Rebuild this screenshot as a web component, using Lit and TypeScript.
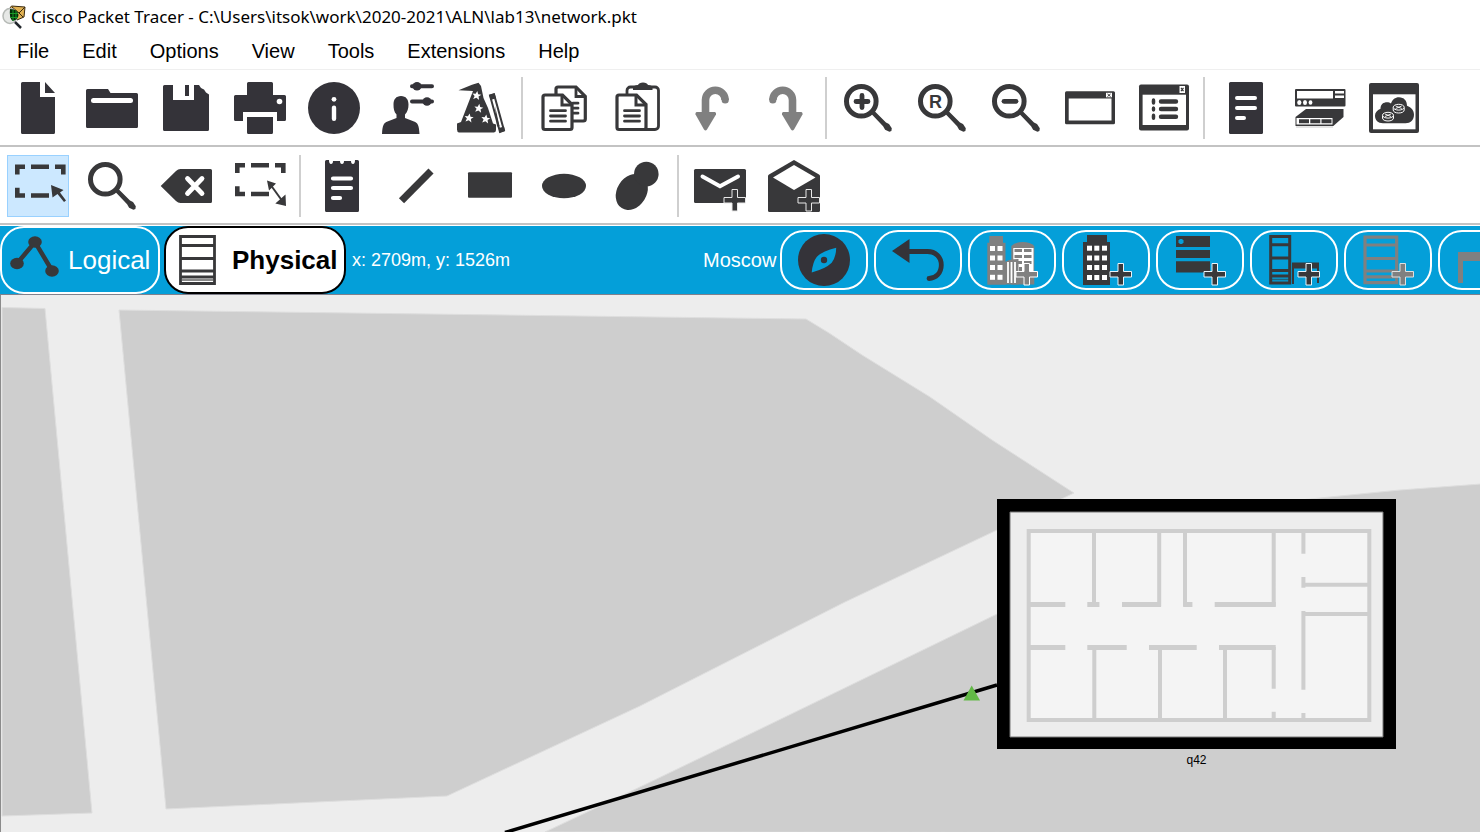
import { LitElement, html, css, svg, nothing } from "lit";
import type { SVGTemplateResult } from "lit";
import { customElement } from "lit/decorators.js";
import { classMap } from "lit/directives/class-map.js";

const INK = "#343339";
const DARK = "#38383a";
const MUTED = "#808080";
const BLUE = "#049fd9";

interface Tool {
  label: string;
  icon: SVGTemplateResult;
  active?: boolean;
}

const plus = (fill: string, edge: string) => svg`
  <path d="M38 29.500h5.500v8h8v5.500h-8v8h-5.500v-8h-8v-5.500h8z"
    fill=${fill} stroke=${edge} stroke-width="1"/>`;

const magnifier = svg`
  <circle cx="19.3" cy="19.300" r="14.800" fill="none" stroke=${DARK} stroke-width="5"/>
  <path d="M28.500 31l3-3 12.500 12.500 3 1.500 2.800 4.300-.4 2.600-2 .8-4.300-2-2-3.500z" fill=${DARK}/>`;

const frontSheet = svg`
  <path d="M7 13h17.500L34 22.500V45.500a2 2 0 0 1-2 2H7a2 2 0 0 1-2-2V15a2 2 0 0 1 2-2z" fill="#fff" stroke=${DARK} stroke-width="3.200"/>
  <path d="M24 13v10h10" fill="none" stroke=${DARK} stroke-width="3"/>
  <path d="M12.500 28.700h15M12.500 34h15M12.500 39.200h15" stroke=${DARK} stroke-width="2.800" stroke-linecap="round"/>`;

const star = (x: number, y: number) => svg`
  <path transform="translate(${x} ${y}) rotate(8)" fill="#fff"
    d="M0-4.500 1.300-1.500 4.500-1.300 2 .8 3 4 0 2.200-3 4-2 .8-4.500-1.300-1.300-1.500z"/>`;

const router = (x: number, y: number) => svg`
  <g transform="translate(${x} ${y})">
    <path d="M-5.500-1v2.500c0 4 11 4 11 0V-1" fill=${DARK} stroke="#fff" stroke-width="1"/>
    <ellipse cx="0" cy="-1.300" rx="5.500" ry="2.900" fill=${DARK} stroke="#fff" stroke-width="1"/>
    <path d="M-3-2.500 3 0M-3 0 3-2.500" stroke="#fff" stroke-width=".9"/>
  </g>`;

const undoHook = svg`
  <path d="M19.500 31V18a9.800 9.800 0 0 1 19.600 0" fill="none" stroke=${MUTED} stroke-width="7.600"/>
  <circle cx="39.200" cy="18" r="3.600" fill=${MUTED}/>
  <path d="M10.500 30h18.500q1.500.5 1 2.500l-9 15q-1.500 2-3 0l-8.500-15q-.5-2 1-2.500z" fill=${MUTED}/>`;

const dashes = (x: number, y: number) => svg`
  <path transform="translate(${x} ${y})" fill="none" stroke=${DARK} stroke-width="4.600"
    d="M2.300 10V2.300H10M16 2.300h18M40 2.300h8.300V10M2.300 23.300V31H10M16 31h18"/>`;

const fileTools: Tool[] = [
  { label: "New", icon: svg`<path fill=${INK} d="M10.500 0H28v15h15v35.500a1.500 1.500 0 0 1-1.500 1.500h-31A1.500 1.500 0 0 1 9 50.500v-49A1.500 1.500 0 0 1 10.500 0zM33 0l10 11H33z"/>` },
  { label: "Open", icon: svg`
      <path fill=${INK} d="M1.500 7H22l2.500 4H50.500a1.500 1.500 0 0 1 1.500 1.500v32a1.500 1.500 0 0 1-1.500 1.500h-49A1.500 1.500 0 0 1 0 44.500v-36A1.500 1.500 0 0 1 1.500 7z"/>
      <rect x="5" y="16" width="42" height="5" rx="2.500" fill="#fff"/>` },
  { label: "Save", icon: svg`
      <path fill=${INK} d="M4.500 3H13v15h21V3h5l2 3 3 1.500 2 3 3 2v35a1.500 1.500 0 0 1-1.500 1.500h-43A1.500 1.500 0 0 1 3 47.500v-43A1.500 1.500 0 0 1 4.500 3z"/>
      <rect x="25" y="3" width="4" height="11" fill=${INK}/>` },
  { label: "Print", icon: svg`
      <path fill=${INK} d="M14.500 0h23A1.500 1.500 0 0 1 39 1.500V13h11.500a1.500 1.500 0 0 1 1.500 1.500v23a1.500 1.500 0 0 1-1.500 1.500H43v-9H9v9H1.500A1.500 1.500 0 0 1 0 37.500v-23A1.500 1.500 0 0 1 1.500 13H13V1.500A1.500 1.500 0 0 1 14.500 0zM13 35h26v15.500a1.500 1.500 0 0 1-1.500 1.500h-23a1.500 1.500 0 0 1-1.500-1.500z"/>
      <circle cx="45.500" cy="19.500" r="2.800" fill="#fff"/>` },
  { label: "Info", icon: svg`
      <circle cx="26" cy="26" r="26" fill=${INK}/>
      <circle cx="26" cy="17.300" r="2.400" fill="#fff"/>
      <rect x="23.800" y="23.500" width="4.400" height="15.500" rx="2.200" fill="#fff"/>` },
  { label: "User profile", icon: svg`
      <path fill=${INK} d="M19 14c5 0 7.500 3.500 7.500 8.500 0 4-1 7.500-3.500 10v3.500l9 3.500c3.500 1.500 5 3 5.500 12.500H0c.5-9.500 2-11 5.500-12.500l9-3.500v-3.500c-2.500-2.500-3-6-3-10 0-5 2.500-8.500 7.500-8.500z"/>
      <path d="M30 4.300h20M30 19.500h20" stroke=${INK} stroke-width="4" stroke-linecap="round"/>
      <ellipse cx="35" cy="4.300" rx="4.500" ry="4.300" fill=${INK}/>
      <ellipse cx="45" cy="19.500" rx="4.500" ry="4.300" fill=${INK}/>` },
  { label: "Wizard", icon: svg`
      <path fill=${DARK} d="M2.500 8.300 16 2.800 22.500.8 25 4l2.500 12L32 26l5 15.500 3 1v5.500q0 2-2 2.500H3q-2-.5-2-3v-6l4-1.500L17 9z"/>
      ${star(20.700, 13.500)}${star(22.700, 26.300)}${star(13, 36)}${star(29.700, 37)}
      <path d="M34 13.500l4-1.300 10 36.300-4 1.500z" fill="#fff" stroke=${DARK} stroke-width="2"/>
      <path d="M33 13l5.500-1.800 1.500 5-5.300 1.800zM39 24l4.500 20-2.500.5zM43 46l5-1.500 1 4.500-5 1.500z" fill=${DARK}/>` },
];

const editTools: Tool[] = [
  { label: "Copy", icon: svg`
      <path d="M20 5h18l9.300 9.500V37a2 2 0 0 1-2 2H20a2 2 0 0 1-2-2V7a2 2 0 0 1 2-2z" fill="#fff" stroke=${DARK} stroke-width="3.200"/>
      <path d="M38 5v9.500h9.300" fill="none" stroke=${DARK} stroke-width="2.800"/>
      <path d="M35 21.200h5M35 26.200h5M35 31.200h5" stroke=${DARK} stroke-width="2.800" stroke-linecap="round"/>
      ${frontSheet}` },
  { label: "Paste", icon: svg`
      <rect x="15" y="5" width="31.500" height="42.500" rx="3.500" fill="#fff" stroke=${DARK} stroke-width="2.800"/>
      <path d="M21 8V5.500q1-2.500 5-2.500 1-2.500 5-2.500t5 2.500q4 0 4.500 2.500V8z" fill=${DARK}/>
      ${frontSheet}` },
  { label: "Undo", icon: undoHook },
  { label: "Redo", icon: svg`<g transform="matrix(-1 0 0 1 52 0)">${undoHook}</g>` },
];

const viewTools: Tool[] = [
  { label: "Zoom in", icon: svg`${magnifier}<path d="M14 19.500h12M20 13.500v12" stroke=${DARK} stroke-width="4.800" stroke-linecap="round"/>` },
  { label: "Zoom reset", icon: svg`${magnifier}<text x="19.500" y="26" class="glyph" text-anchor="middle" fill=${DARK}>R</text>` },
  { label: "Zoom out", icon: svg`${magnifier}<path d="M14 19.300h12" stroke=${DARK} stroke-width="4.800" stroke-linecap="round"/>` },
  { label: "Drawing palette", icon: svg`
      <rect x="1" y="9.300" width="50" height="33" rx="1.500" fill=${DARK}/>
      <rect x="4.700" y="16.500" width="42.800" height="22" fill="#fff"/>
      <rect x="42" y="10.800" width="6" height="4.500" fill="#fff"/>
      <path d="M43.500 12l3 2.500M46.500 12l-3 2.500" stroke=${DARK} stroke-width="1"/>` },
  { label: "Custom devices dialog", icon: svg`
      <rect x="1" y="2.500" width="50" height="46" rx="2" fill=${DARK}/>
      <rect x="4.600" y="12.700" width="43.400" height="30.300" fill="#fff"/>
      <rect x="41.500" y="4" width="5.500" height="7" fill="#fff"/>
      <path d="M43 5.800l2.500 3.400M45.500 5.800l-2.500 3.400" stroke=${DARK} stroke-width="1.200"/>
      <path d="M23 19.500h15M23 27h15M23 34.700h15" stroke=${DARK} stroke-width="4.400" stroke-linecap="round"/>
      <g fill=${DARK}><ellipse cx="15.500" cy="19.500" rx="1.800" ry="3.200"/><ellipse cx="15.500" cy="27" rx="1.800" ry="2.800"/><ellipse cx="15.500" cy="34.700" rx="1.800" ry="3.200"/></g>` },
];

const deviceTools: Tool[] = [
  { label: "Activity description", icon: svg`
      <rect x="9" y="0" width="34" height="52" rx="1.500" fill=${INK}/>
      <path d="M17 16h18M17 26h18M17 36h7" stroke="#fff" stroke-width="4" stroke-linecap="round"/>` },
  { label: "Devices", icon: svg`
      <rect x="1" y="7" width="50.500" height="17.500" rx="1" fill=${DARK}/>
      <path d="M3 9h36v7.500H3zM41 9h9v2.500h-9zM41 13.500h9v2.500h-9z" fill="#fff"/>
      <g fill="#fff"><ellipse cx="5.300" cy="20.500" rx="2.100" ry="2.500"/><ellipse cx="11" cy="20.500" rx="2" ry="2.500"/><ellipse cx="16.500" cy="20.500" rx="1.900" ry="2.300"/></g>
      <path d="M1.500 35 12 27H49.500v8L39.300 44H1.500z" fill=${DARK}/>
      <path d="M2.500 36h36v6.500h-36z" fill="#fff"/>
      <path d="M5 37.300h10v4H5zM16.300 37.300h10v4h-10zM27.500 37.300h10v4h-10z" fill=${DARK}/>
      <path d="M2 45h37" stroke="#ddd" stroke-width="1.500"/>` },
  { label: "Cloud", icon: svg`
      <rect x="1" y="1" width="50" height="50" rx="2" fill=${DARK}/>
      <rect x="5" y="12.300" width="42.500" height="35" fill="#fff"/>
      <path d="M15 41.300c-5 0-8-3-8-7.500 0-3 2-5.500 5.500-7 0-4.500 3-6.500 6.500-6.500 1.500 0 3 .3 4 1.200 1.500-4 4-6.200 8-6.200 5 0 8 3.500 8 8.500 4.500 1.500 7 5 7 9 0 5-3.500 8.500-8.500 8.500z" fill=${DARK}/>
      ${router(30.700, 26.500)}${router(20, 34.500)}` },
];

const selectTools: Tool[] = [
  { label: "Select", active: true, icon: svg`${dashes(3, 4.500)}<path d="M39 25l12.500 5-3.500 2.500 6 8-2 1.500-6.500-8-5 3.600z" fill=${DARK}/>` },
  { label: "Inspect", icon: magnifier },
  { label: "Delete", icon: svg`
      <path d="M.7 26 16 11q2-2 4.500-2H50.500a1.500 1.500 0 0 1 1.500 1.500v31a1.500 1.500 0 0 1-1.500 1.500h-30q-2.500 0-4.500-2z" fill=${DARK}/>
      <path d="M27.500 18.500l14.500 15M42 18.500l-14.500 15" stroke="#fff" stroke-width="4.800" stroke-linecap="round"/>` },
  { label: "Resize shape", icon: svg`${dashes(1, 3)}
      <path d="M36 24l13 18" stroke=${DARK} stroke-width="2"/>
      <path d="M33 20.500l9 3-7 7zM52 46l-10.700-2.500L51.500 34.500z" fill=${DARK}/>` },
];

const drawTools: Tool[] = [
  { label: "Place note", icon: svg`
      <path d="M10.500 0H13q0 4 2 4t2-3h7q0 3 2 3t2-3h7q0 3 2 3t2-4h2.500A1.500 1.500 0 0 1 43 1.500v49a1.500 1.500 0 0 1-1.500 1.500h-31A1.500 1.500 0 0 1 9 50.500v-49A1.500 1.500 0 0 1 10.500 0z" fill=${INK}/>
      <path d="M17 18.500h18M17 28h18M17 38h7" stroke="#fff" stroke-width="4.200" stroke-linecap="round"/>` },
  { label: "Draw line", icon: svg`<path d="M11.500 40.700 41 11" stroke=${DARK} stroke-width="7.200"/>` },
  { label: "Draw rectangle", icon: svg`<rect x="4" y="12.300" width="44" height="25.500" rx="1" fill=${DARK}/>` },
  { label: "Draw ellipse", icon: svg`<ellipse cx="26" cy="26" rx="22" ry="12.200" fill=${DARK}/>` },
  { label: "Draw freeform", icon: svg`
      <ellipse cx="19.800" cy="32" rx="14.800" ry="19" transform="rotate(32 19.800 32)" fill=${DARK}/>
      <circle cx="34.300" cy="14" r="12.300" fill=${DARK}/>` },
];

const pduTools: Tool[] = [
  { label: "Add simple PDU", icon: svg`
      <rect x="0" y="9" width="52" height="34" rx="1.500" fill=${DARK}/>
      <path d="M8.500 16.500 26 26.200l18-9.700" fill="none" stroke="#fff" stroke-width="4" stroke-linecap="round"/>
      ${plus(DARK, "#e8e8e8")}` },
  { label: "Add complex PDU", icon: svg`
      <path d="M26 0 51 14.500q1 .6 1 1.500V50.500a1.500 1.500 0 0 1-1.500 1.500h-49A1.500 1.500 0 0 1 0 50.500V16q0-.9 1-1.500z" fill=${DARK}/>
      <path d="M26 5 47.500 17.500 26 30 5 17.500z" fill="#fff"/>
      ${plus(DARK, "#e8e8e8")}` },
];

const grid = (xs: number[], ys: number[], w: number, h: number) =>
  ys.map((y) => xs.map((x) => svg`<rect x=${x} y=${y} width=${w} height=${h} fill="#fff"/>`));

const placeTools: Tool[] = [
  { label: "Navigation panel", icon: svg`
      <circle cx="26" cy="26" r="26" fill=${INK}/>
      <path d="M38.200 13.700q0 9-4.500 15-6 6-20 9.700 1-10.500 5-15.500 5-5.500 19.500-9.200z" fill=${BLUE}/>
      <circle cx="26" cy="26" r="3.200" fill=${INK}/>` },
  { label: "Back to parent level", icon: svg`
      <path d="M0 17 17.500 5v24z" fill=${INK}/>
      <path d="M16 17.500h19.500c8 0 13.800 5.500 13.800 13.500S44 44.300 37 44.500" fill="none" stroke=${INK} stroke-width="4.800" stroke-linecap="round"/>` },
  { label: "New city", icon: svg`
      <path d="M1.300 8.700h2V2H17v6.700h2.500v42H1.300z" fill=${MUTED}/>
      ${grid([4, 11.500], [12, 21.500, 31, 40.800], 5, 5)}
      <path d="M25.300 12q4-4 11.500-4t11.500 4v38.500H25.300z" fill=${MUTED}/>
      <path d="M27.300 14h20.200v26H27.300z" fill="#fff"/>
      <path d="M28.500 15h7.500v3h-7.500zM38 15h7.500v3h-7.500zM28.500 21h7.500v3h-7.500zM38 21h7.500v3h-7.500zM28.500 27h7.500v3h-7.500zM38 27h7.500v3h-7.500zM33 33h3v8h-3z" fill=${MUTED}/>
      <path d="M19 28q4-3 13.500-3v25.500H19z" fill=${MUTED}/>
      <path d="M22 28v21M25.500 28v21M29 28v21" stroke="#fff" stroke-width="1.800"/>
      ${plus(MUTED, "#fff")}` },
  { label: "New building", icon: svg`
      <path d="M3 8h4V1h20v7h3v43H3z" fill=${DARK}/>
      ${grid([7, 14.300, 22], [11.700, 21.500, 31, 41], 5, 5)}
      ${plus(DARK, "#e8f4fa")}` },
  { label: "New closet", icon: svg`
      <path d="M2 2h34v11H2zM2 16h34v8H2zM2 27.200h34V38.500H2z" fill=${DARK}/>
      <path d="M7 5v5M4.500 7.500h5" stroke=${BLUE} stroke-width="3"/>
      ${plus(DARK, "#e8f4fa")}` },
  { label: "New rack with table", icon: svg`
      <path d="M2.700 2.500h19v46.500h-19zM2.700 10.700h19M2.700 24h19M2.700 36.500h19M2.700 42h19" fill="none" stroke=${DARK} stroke-width="3"/>
      <path d="M2.700 45.500h19" stroke=${DARK} stroke-width="1.500" opacity=".6"/>
      <path d="M24 28.500h27V49h-2V34.500H26V50h-2z" fill=${DARK}/>
      ${plus(DARK, "#e8f4fa")}` },
  { label: "New rack", icon: svg`
      <path d="M3 3.200h31.700v45.500H3zM3 11h31.700M3 24.500h31.700M3 37h31.700M3 42.800h31.700" fill="none" stroke=${MUTED} stroke-width="3.200"/>
      ${plus(MUTED, "#e0e0e0")}` },
  { label: "New table", icon: svg`<path d="M2 18h48v31h-5V27H7v22H2z" fill=${MUTED}/>` },
];

@customElement("place-map")
export class PlaceMap extends LitElement {
  static styles = css`
    :host { display: block; min-height: 0; background: #ededed; border-left: 1px solid #8b8b8b; overflow: hidden; }
    .canvas { display: block; width: 100%; height: 100%; }
    .caption { font: 12px "Liberation Sans", Arial, sans-serif; fill: #000; }
  `;

  render() {
    return html`
      <svg class="canvas" viewBox="1 295 1479 537" preserveAspectRatio="xMinYMin slice" role="img" aria-label="Moscow">
        <g fill="#cecece" stroke="#dedede" stroke-width="1">
          <path d="M2 307.500 45 308.500 92 813 2 816z"/>
          <path d="M119 310 806 319 829 333 862 355 930 397 992 440 1074 493 997 530 845 602 640 706 447 796 166 809z"/>
          <path d="M545 832 640 787 752 733 997 614 1200 510 1320 498 1400 490 1481 484V833z"/>
        </g>
        <path d="M505 832.500 997 685" stroke="#000" stroke-width="3.500"/>
        <path d="M971.700 685.500 980 700.500H963.500z" fill="#62b946"/>
        <path d="M997 499H1396V749H997z" fill="#000"/>
        <path d="M1010 512H1383V737H1010z" fill="#ededed" stroke="#777" stroke-width="1"/>
        <path d="M1028.700 531H1369.300V720H1028.700z" fill="#f4f4f4"/>
        <path fill="none" stroke="#cecece" stroke-width="4"
          d="M1028.700 531H1369.300V720H1028.700zM1094 531V604.500M1159.200 531V606.500M1185 531V606.500M1273.700 531V606.500
             M1303.400 531V553.700M1303.400 577V587.700M1303.400 611V689.700M1303.400 713V720
             M1303.400 584.700H1369M1303.400 614H1369
             M1094.300 647V720M1160 647V720M1225 647V720M1273.700 647V688.700M1273.700 711.700V720"/>
        <path fill="none" stroke="#cecece" stroke-width="5"
          d="M1030 604.500H1065.300M1087.300 604.500H1099.400M1122 604.500H1161M1183.300 604.500H1192.400M1214.700 604.500H1275.700
             M1030 647.400H1065.300M1087.300 647.400H1126.700M1149 647.400H1196.700M1219 647.400H1275.700"/>
        <text class="caption" x="1196.500" y="764" text-anchor="middle">q42</text>
      </svg>`;
  }
}

@customElement("app-root")
export class AppRoot extends LitElement {
  static styles = css`
    :host {
      display: flex; flex-direction: column; height: 100vh; overflow: hidden;
      background: #fff; color: #000; font-family: "Liberation Sans", Arial, sans-serif;
    }
    button { font: inherit; color: inherit; background: none; border: 0; padding: 0; margin: 0; }
    svg { display: block; flex: none; overflow: visible; }
    .titlebar { display: flex; align-items: center; gap: 4px; height: 34px; padding-left: 2px; box-sizing: border-box; flex: none; }
    .title { margin: 0; font: 17px/24px "Noto Sans", "Open Sans", sans-serif; white-space: nowrap; }
    .menubar { display: flex; align-items: center; gap: 33px; height: 36px; padding: 0 17px 2px; box-sizing: border-box; border-bottom: 1px solid #efefef; flex: none; font-size: 20px; line-height: 24px; }
    .toolbar { display: flex; align-items: center; padding: 7px 0 6px 1px; border-bottom: 2px solid #c3c3c3; flex: none; }
    .toolbar.second { padding-top: 8px; }
    .tool { display: flex; align-items: center; justify-content: center; flex: none; width: 62px; height: 62px; margin: 0 6px; box-sizing: border-box; }
    .tool.active { background: #cce8ff; border: 1px solid #99d1ff; }
    .divider { flex: none; width: 2px; height: 62px; margin: 0 4px 0 2px; background: #cfcfcf; }
    .glyph { font: bold 18px "Liberation Sans", Arial, sans-serif; }
    .modebar { display: flex; align-items: center; height: 68px; flex: none; margin-top: 1px; background: #049fd9; color: #fff; border-bottom: 1px solid #80808c; white-space: nowrap; }
    .mode { display: flex; align-items: center; flex: none; height: 68px; box-sizing: border-box; border: 2px solid #fff; border-radius: 24px; font-size: 26px; line-height: 30px; }
    .mode.logical { gap: 8px; width: 160px; padding-left: 8px; }
    .mode.physical { gap: 16px; width: 182px; margin-left: 4px; padding-left: 13px; background: #fff; color: #000; border-color: #000; font-weight: bold; }
    .coords { flex: 1 0 351px; margin-left: 6px; font-size: 18px; line-height: 24px; }
    .place { flex: none; font-size: 20px; line-height: 24px; margin-right: 4px; }
    .actions { display: flex; gap: 6px; flex: none; width: 700px; }
    .action { display: flex; align-items: center; justify-content: center; flex: none; width: 88px; height: 60px; box-sizing: border-box; border: 2px solid #fff; border-radius: 24px; }
    place-map { flex: 1; }
  `;

  private icon(content: SVGTemplateResult) {
    return html`<svg width="52" height="52" viewBox="0 0 52 52" aria-hidden="true">${content}</svg>`;
  }

  private toolbar(groups: Tool[][], second = false) {
    return html`
      <div class=${classMap({ toolbar: true, second })} role="toolbar">
        ${groups.map((tools, i) => html`
          ${i ? html`<span class="divider"></span>` : nothing}
          ${tools.map((t) => html`
            <button type="button" class=${classMap({ tool: true, active: !!t.active })} aria-label=${t.label}>${this.icon(t.icon)}</button>`)}
        `)}
      </div>`;
  }

  render() {
    return html`
      <header class="titlebar">
        <svg width="25" height="24" viewBox="0 0 25 24" aria-hidden="true">
          <path d="M8 3 9.500 1 23 2 22 12 15 15z" fill="#e0b152" stroke="#3a2a10" stroke-width="1"/>
          <path d="M10 2l7 6 6-6M17 8l4 4" fill="none" stroke="#3a2a10" stroke-width="1"/>
          <ellipse cx="8" cy="11" rx="7" ry="7.500" fill="#e6e8e6" stroke="#b5b9b5" stroke-width="1.500"/>
          <path d="M8 4q8 0 8.500 6-.5 5-6 6-3.500-3-2.500-12z" fill="#052c08"/>
          <path d="M11 5v11M14 6v8M8 8.500h8M8 12.500h8" stroke="#1a9a28" stroke-width="1"/>
          <path d="M13 17l6 6" stroke="#22272c" stroke-width="2.500"/>
        </svg>
        <h1 class="title">Cisco Packet Tracer - C:\\Users\\itsok\\work\\2020-2021\\ALN\\lab13\\network.pkt</h1>
      </header>
      <nav class="menubar">
        ${["File", "Edit", "Options", "View", "Tools", "Extensions", "Help"].map((m) => html`<button type="button">${m}</button>`)}
      </nav>
      ${this.toolbar([fileTools, editTools, viewTools, deviceTools])}
      ${this.toolbar([selectTools, drawTools, pduTools], true)}
      <div class="modebar">
        <button type="button" class="mode logical">
          <svg width="50" height="52" viewBox="0 0 50 52" aria-hidden="true">
            <path d="M7 29.500 25 8l17 28.500" fill="none" stroke=${DARK} stroke-width="4.500"/>
            <g fill=${DARK}><ellipse cx="25" cy="8" rx="6.800" ry="5.700"/><ellipse cx="7" cy="29.500" rx="6.800" ry="5.700"/><ellipse cx="42" cy="37" rx="6.800" ry="5.700"/></g>
          </svg>
          <span>Logical</span>
        </button>
        <button type="button" class="mode physical">
          <svg width="37" height="50" viewBox="0 0 37 50" aria-hidden="true">
            <path d="M1.500 1.500h34v47h-34zM1.500 10.500h34M1.500 23.500h34M1.500 36h34M1.500 42h34" fill="none" stroke=${DARK} stroke-width="2.800"/>
            <path d="M3 45h31" stroke="#8a8a8a" stroke-width="2"/>
          </svg>
          <span>Physical</span>
        </button>
        <span class="coords">x: 2709m, y: 1526m</span>
        <span class="place">Moscow</span>
        <div class="actions">
          ${placeTools.map((t) => html`<button type="button" class="action" aria-label=${t.label}>${this.icon(t.icon)}</button>`)}
        </div>
      </div>
      <place-map></place-map>
    `;
  }
}
